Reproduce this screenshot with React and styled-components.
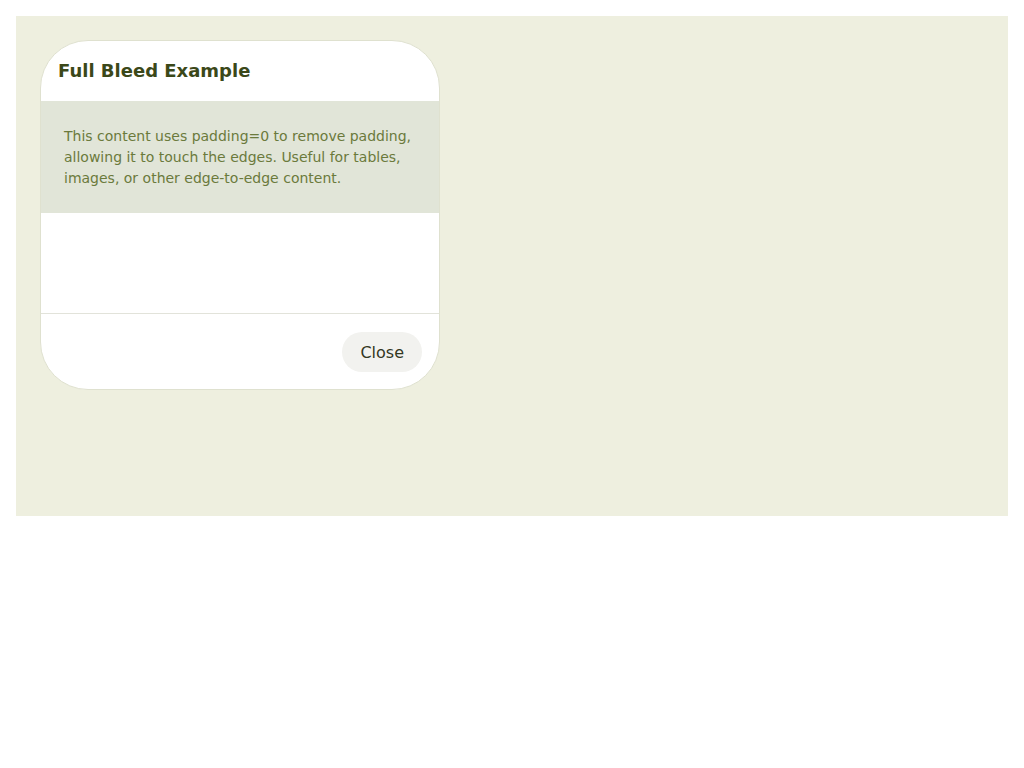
import React from 'react';
import styled, { createGlobalStyle } from 'styled-components';

const GlobalStyle = createGlobalStyle`
  body {
    margin: 0;
    padding: 16px;
    background: #ffffff;
    font-family: "DejaVu Sans", "Noto Sans", sans-serif;
  }
`;

const Stage = styled.div`
  height: 500px;
  background: #eeefdf;
  padding: 24px;
  box-sizing: border-box;
`;

const Dialog = styled.div`
  width: 400px;
  background: #ffffff;
  border: 1px solid #dfe1cf;
  border-radius: 48px;
  overflow: hidden;
  box-sizing: border-box;
  display: flex;
  flex-direction: column;
`;

const Header = styled.div`
  height: 60px;
  box-sizing: border-box;
  display: flex;
  align-items: center;
  padding: 0 17px 2px;
`;

const Title = styled.h2`
  margin: 0;
  font-size: 18px;
  font-weight: bold;
  color: #3b4819;
`;

const Body = styled.div`
  background: #e1e5d8;
  padding: 25px 23px 24px;
  color: #6b7a3c;
  font-size: 14px;
  line-height: 21px;
`;

const Spacer = styled.div`
  height: 100px;
  border-bottom: 1px solid #e2e3da;
`;

const Footer = styled.div`
  display: flex;
  justify-content: flex-end;
  padding: 18px 17px 17px;
`;

const Button = styled.button`
  height: 40px;
  padding: 0 18px;
  border: none;
  border-radius: 20px;
  background: #f2f2ef;
  color: #33381f;
  font-family: inherit;
  font-size: 16px;
  cursor: pointer;
`;

export default function App() {
  return (
    <>
      <GlobalStyle />
      <Stage>
        <Dialog>
          <Header>
            <Title>Full Bleed Example</Title>
          </Header>
          <Body>
            This content uses padding=0 to remove padding, allowing it to touch the edges.
            Useful for tables, images, or other edge-to-edge content.
          </Body>
          <Spacer />
          <Footer>
            <Button>Close</Button>
          </Footer>
        </Dialog>
      </Stage>
    </>
  );
}
